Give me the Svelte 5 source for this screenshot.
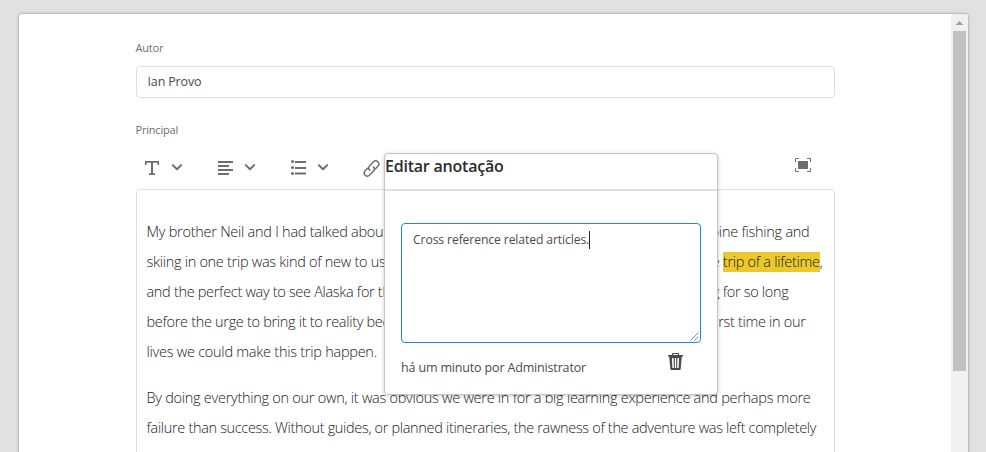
<script>
  const paragraphs = [
    [
      { start: 'My brother Neil and I had talked about it', end: 'to combine fishing and', width: 663, tracking: -0.26 },
      { start: 'skiing in one trip was kind of new to us', end: 'the', mark: 'trip of a lifetime', tail: ',', width: 676, tracking: -0.29 },
      { start: 'and the perfect way to see Alaska for the', end: 'dreaming for so long', width: 642, tracking: -0.31 },
      { start: 'before the urge to bring it to reality became', end: 'the first time in our', width: 659, tracking: -0.31 },
      { start: 'lives we could make this trip happen.', width: 230, tracking: -0.25 }
    ],
    [
      { start: 'By doing everything on our own, it was obvious we were in for a big learning experience and perhaps more', width: 665, tracking: -0.27 },
      { start: 'failure than success. Without guides, or planned itineraries, the rawness of the adventure was left completely', width: 671, tracking: -0.33 }
    ]
  ];
  let note = $state('Cross reference related articles.');
</script>

{#snippet chevron()}
  <svg class="chevron" width="10" height="7" viewBox="0 0 10 7"><path d="M.8 1.1 5 5.2 9.2 1.1" fill="none" stroke="#6e6e6e" stroke-width="2" stroke-linecap="round" stroke-linejoin="round" /></svg>
{/snippet}

<div class="page">
  <main class="card">
    <form class="form">
      <label for="author">Autor</label>
      <div class="input" id="author">Ian Provo</div>
      <label class="second" for="body">Principal</label>
      <div class="toolbar">
        <div class="group">
          <svg width="14" height="14" viewBox="0 0 14 14"><path d="M0 0h14v4h-1.600V1.800H8v10.500h2V14H4v-1.700h2V1.800H1.600V4H0z" fill="#6e6e6e" /></svg>
          {@render chevron()}
        </div>
        <div class="group">
          <svg width="15" height="14" viewBox="0 0 15 14"><path d="M0 0h15v2H0zM0 4h11v2H0zM0 8h15v2H0zM0 12h11v2H0z" fill="#6e6e6e" /></svg>
          {@render chevron()}
        </div>
        <div class="group">
          <svg width="15" height="15" viewBox="0 0 15 15"><g fill="#6e6e6e"><circle cx="1.5" cy="1.5" r="1.5" /><circle cx="1.5" cy="7.5" r="1.5" /><circle cx="1.5" cy="13.5" r="1.5" /><path d="M4 1h11v2H4zM4 7h11v2H4zM4 12.5h11v2H4z" /></g></svg>
          {@render chevron()}
        </div>
        <svg class="link" width="17" height="17" viewBox="0 0 17 17"><g fill="none" stroke="#6e6e6e" stroke-width="1.5" stroke-linecap="round"><path d="M6.700 10.200C5.400 8.900 5.400 7 6.700 5.700l3.600-3.700c1.300-1.300 3.200-1.400 4.500-.2 1.300 1.300 1.300 3.200 0 4.500l-2.300 2.400" /><path d="M10.300 6.800c1.300 1.300 1.300 3.200 0 4.500l-3.600 3.700c-1.300 1.300-3.200 1.400-4.500.2-1.300-1.300-1.300-3.200 0-4.500l2.300-2.400" /></g></svg>
        <svg class="full" width="16" height="14" viewBox="0 0 16 14"><path d="M3 3h10v8H3z" fill="#6e6e6e" /><path d="M.5 4V.5H4M12 .5h3.500V4M15.500 10v3.500H12M4 13.500H.5V10" fill="none" stroke="#6e6e6e" /></svg>
      </div>
      <article class="editor" id="body">
        {#each paragraphs as lines}
          <div class="paragraph">
            {#each lines as line}
              <div class="line" style:width="{line.width}px" style:letter-spacing="{line.tracking}px">
                <span>{line.start}</span>
                {#if line.end}<span>{line.end}{#if line.mark}{' '}<mark>{line.mark}</mark>{line.tail}{/if}</span>{/if}
              </div>
            {/each}
          </div>
        {/each}
      </article>
    </form>
    <div class="scrollbar">
      <svg width="7" height="4" viewBox="0 0 7 4" shape-rendering="crispEdges"><path d="M3 0h1v1h1v1h1v1h1v1H0V3h1V2h1V1h1z" fill="#a1a1a1" /></svg>
      <div class="thumb"></div>
    </div>
  </main>
  <section class="dialog">
    <h2>Editar anotação</h2>
    <div class="content">
      <div class="note">{note}<i></i>
        <svg width="9" height="9" viewBox="0 0 9 9"><path d="M.5 8.500 8.500.5M4.500 8.500l4-4" stroke="#555" stroke-width="1" stroke-dasharray="1.1 .3" /></svg>
      </div>
      <footer>
        <span>há um minuto por Administrator</span>
        <svg width="15" height="17" viewBox="0 0 15 17"><path d="M4 3V1.200C4 .5 4.400 0 5.200 0h4.600c.8 0 1.200.5 1.200 1.200V2h4v1.500h-1.200L12.700 16c-.1.700-.4 1-1 1H3.300c-.6 0-.9-.3-1-1L1.200 3.500H0V2h4zM5.200 2h4.600v-.8H5.200zM4 5l.6 10h1.200L5.400 5zm2.900 0v10h1.200V5zm2.700 0-.4 10h1.200L11 5z" fill="#4b4b4b" fill-rule="nonzero" /><path d="M5.200 1.100h4.600V2H5.200zM4 5h1.300l.4 10H4.600zM6.900 5h1.200v10H6.900zM9.700 5H11l-.6 10H9.300z" fill="#fff" opacity=".75" /></svg>
      </footer>
    </div>
  </section>
</div>

<style>
  :global(body) { overflow: hidden; }
  .page { height: 452px; box-sizing: border-box; padding: 14px 18px 0 19px; background: #e1e1e1; position: relative; overflow: hidden; font-family: 'Open Sans', 'Noto Sans', sans-serif; color: #4b4b4b; }
  .card { display: flex; justify-content: space-between; height: 500px; background: #fff; border-radius: 3px 3px 0 0; box-shadow: 0 0 1px 1px rgba(0,0,0,.13), 0 0 5px rgba(0,0,0,.1); overflow: hidden; }
  .form { width: 699px; margin-left: 117px; padding-top: 26px; }
  label { display: block; height: 16px; line-height: 16px; font-size: 11px; letter-spacing: -.2px; color: #6e6e6e; margin-left: -.5px; }
  .input { height: 32px; box-sizing: border-box; margin-top: 10px; padding-left: 10.500px; border: 1px solid #dedede; border-radius: 4px; font-size: 12.500px; letter-spacing: -.15px; line-height: 30px; }
  .second { margin-top: 24px; }
  .toolbar { height: 51px; display: flex; align-items: center; padding: 8px 0 0 9px; box-sizing: border-box; }
  .group { width: 73px; display: flex; align-items: center; height: 20px; }
  .group svg:first-child { margin-right: 13px; }
  .group + .group svg:first-child { margin-right: 12px; }
  .chevron { margin-top: -1px; }
  .link { margin-left: -1.500px; margin-top: 1px; }
  .full { margin-left: auto; margin-right: 24px; margin-top: -6px; }
  .editor { height: 330px; box-sizing: border-box; border: 1px solid #dedede; border-radius: 4px; padding: 27px 0 0 9.500px; font-size: 14.500px; font-weight: 300; line-height: 30px; color: #222; }
  .paragraph { margin-bottom: 16px; }
  .line { display: flex; justify-content: space-between; white-space: nowrap; height: 30px; }
  mark { display: inline-block; height: 20px; line-height: 20px; background: #ebc92c; color: #222; }
  .scrollbar { width: 17px; background: #f0f0f0; display: flex; flex-direction: column; align-items: center; padding-top: 7px; box-sizing: border-box; }
  .thumb { width: 13px; height: 340px; margin-top: 6px; background: #c1c1c1; flex: none; }
  .scrollbar svg { flex: none; }
  .dialog { position: absolute; left: 384px; top: 153px; width: 334px; height: 242px; box-sizing: border-box; background: #fff; border: 1px solid #c5c5c5; border-radius: 4px; box-shadow: 0 1px 4px rgba(0,0,0,.2); }
  h2 { margin: 0; height: 37px; box-sizing: border-box; border-bottom: 2px solid #e0e0e0; font-size: 16px; font-weight: 600; letter-spacing: -.220px; line-height: 25px; color: #2c2c2c; }
  .content { padding: 32px 16px 0; }
  .note { position: relative; height: 120px; box-sizing: border-box; border: 1px solid #2680eb; border-radius: 4px; padding: 7px 11px; font-size: 12.200px; line-height: 18px; letter-spacing: -.12px; display: flex; align-items: flex-start; }
  .note i { width: 1px; height: 18px; background: #222; }
  .note svg { position: absolute; right: 1px; bottom: 1px; }
  footer { display: flex; justify-content: space-between; align-items: flex-start; padding: 11px 18px 0 0; font-size: 12.500px; letter-spacing: -.16px; line-height: 27px; }
  footer svg { margin-top: -1px; }
</style>
